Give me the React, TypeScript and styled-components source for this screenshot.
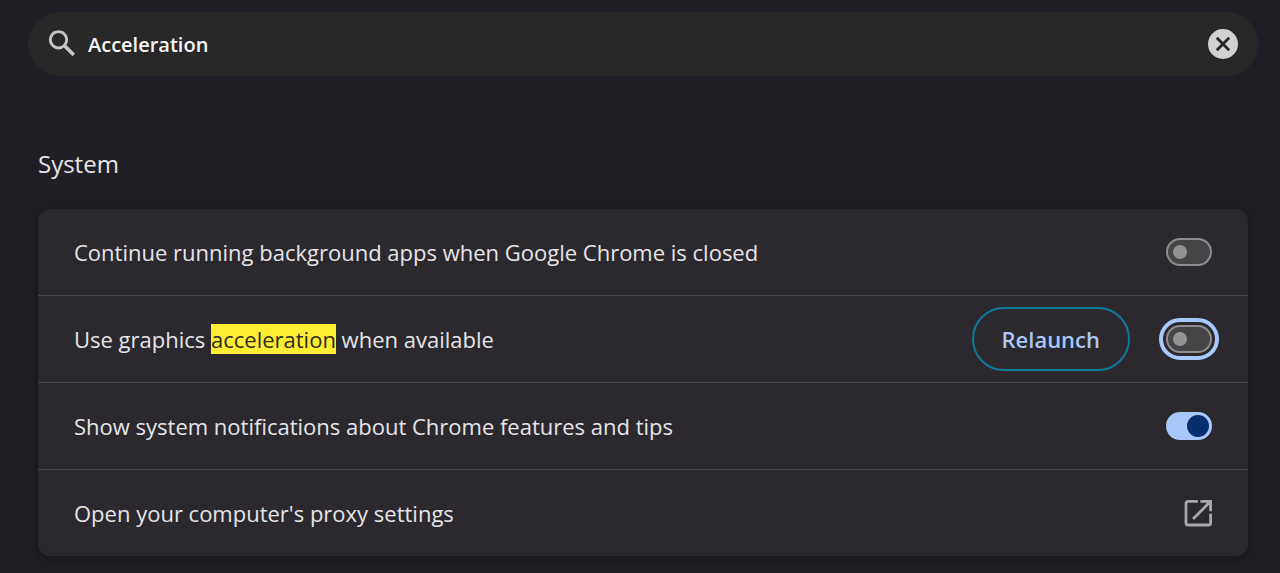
import React, { useState } from "react";
import styled, { createGlobalStyle, css } from "styled-components";

const GlobalStyle = createGlobalStyle`
  *, *::before, *::after { box-sizing: border-box; }
  body {
    margin: 0;
    background: #211f26;
    color: #e6e4e8;
    font-family: "Segoe UI", "Open Sans", "Noto Sans", sans-serif;
  }
`;

const Page = styled.main`
  padding: 12px 22px 17px 28px;
`;

const SearchBar = styled.form`
  display: flex;
  align-items: center;
  gap: 12px;
  height: 64px;
  padding: 0 20px;
  border-radius: 32px;
  background: #292829;
`;

const SearchIcon = styled.svg`
  flex: none;
  width: 28px;
  height: 28px;
  color: #c6c5c7;
`;

const SearchInput = styled.input`
  flex: 1;
  min-width: 0;
  padding: 2px 0 0;
  border: 0;
  outline: 0;
  background: transparent;
  color: #f6f5f7;
  font: 600 20px/28px "Segoe UI", "Open Sans", "Noto Sans", sans-serif;
`;

const ClearButton = styled.button`
  display: flex;
  flex: none;
  padding: 0;
  border: 0;
  border-radius: 50%;
  background: #d2d1d3;
  color: #252427;
  cursor: pointer;
`;

const Section = styled.section`
  padding: 72px 10px 0;
`;

const Heading = styled.h2`
  margin: 0 0 29px;
  font-size: 24px;
  font-weight: 400;
  line-height: 32px;
`;

const Card = styled.div`
  border-radius: 12px;
  background: #2b292e;
  box-shadow: 0 2px 6px 2px rgba(0, 0, 0, 0.2);
`;

const rowLayout = css`
  display: flex;
  align-items: center;
  gap: 36px;
  min-height: 86px;
  padding: 0 36px;
  font-size: 22px;
  line-height: 30px;
`;

const Row = styled.div`
  ${rowLayout}
  border-bottom: 1px solid #4a484d;
  box-sizing: content-box;
`;

const LinkRow = styled.a`
  ${rowLayout}
  color: inherit;
  text-decoration: none;
`;

const RowLabel = styled.label`
  flex: 1;
`;

const RowText = styled.span`
  flex: 1;
`;

const Highlight = styled.mark`
  background: #fdee33;
  color: #2f2b1c;
`;

const RelaunchButton = styled.button`
  height: 64px;
  padding: 0 28px;
  border: 2px solid #107a9b;
  border-radius: 32px;
  background: transparent;
  color: #a8c7fa;
  font: 600 22px/30px "Segoe UI", "Open Sans", "Noto Sans", sans-serif;
  cursor: pointer;
`;

const Switch = styled.input<{ $ringed?: boolean }>`
  appearance: none;
  display: flex;
  align-items: center;
  flex: none;
  width: 46px;
  height: 28px;
  margin: 0;
  padding: 0 5px;
  border: 2px solid #8d8c8e;
  border-radius: 14px;
  background: #454447;
  outline: ${(p) => (p.$ringed ? "4px solid #a8c7fa" : "none")};
  outline-offset: 3px;
  cursor: pointer;

  &::before {
    content: "";
    width: 14px;
    height: 14px;
    border-radius: 50%;
    background: #949395;
  }

  &:checked {
    justify-content: flex-end;
    padding: 0 1px;
    border-color: #a8c7fa;
    background: #a8c7fa;
  }

  &:checked::before {
    width: 22px;
    height: 22px;
    background: #062e6f;
  }
`;

const ExternalIcon = styled.svg`
  flex: none;
  width: 28px;
  height: 28px;
  color: #a9a8aa;
`;

export default function App() {
  const [query, setQuery] = useState("Acceleration");
  const [background, setBackground] = useState(false);
  const [graphics, setGraphics] = useState(false);
  const [tips, setTips] = useState(true);

  return (
    <>
      <GlobalStyle />
      <Page>
        <SearchBar role="search" onSubmit={(e) => e.preventDefault()}>
          <SearchIcon viewBox="0 0 28 28" fill="none" stroke="currentColor" aria-hidden="true">
            <circle cx="10.5" cy="9.8" r="8.2" strokeWidth="2.9" />
            <path d="M16.3 15.6 25.8 25.1" strokeWidth="3.6" />
          </SearchIcon>
          <SearchInput
            aria-label="Search settings"
            value={query}
            onChange={(e) => setQuery(e.target.value)}
          />
          <ClearButton type="button" aria-label="Clear search" onClick={() => setQuery("")}>
            <svg width="30" height="30" viewBox="0 0 30 30" fill="none" stroke="currentColor" strokeWidth="2.8" aria-hidden="true">
              <path d="M8.8 8.8 21.2 21.2M21.2 8.8 8.8 21.2" />
            </svg>
          </ClearButton>
        </SearchBar>

        <Section aria-labelledby="system">
          <Heading id="system">System</Heading>
          <Card>
            <Row>
              <RowLabel htmlFor="background">
                Continue running background apps when Google Chrome is closed
              </RowLabel>
              <Switch
                id="background"
                type="checkbox"
                role="switch"
                checked={background}
                onChange={(e) => setBackground(e.target.checked)}
              />
            </Row>
            <Row>
              <RowLabel htmlFor="graphics">
                Use graphics <Highlight>acceleration</Highlight> when available
              </RowLabel>
              <RelaunchButton type="button">Relaunch</RelaunchButton>
              <Switch
                id="graphics"
                type="checkbox"
                role="switch"
                $ringed
                checked={graphics}
                onChange={(e) => setGraphics(e.target.checked)}
              />
            </Row>
            <Row>
              <RowLabel htmlFor="tips">
                Show system notifications about Chrome features and tips
              </RowLabel>
              <Switch
                id="tips"
                type="checkbox"
                role="switch"
                checked={tips}
                onChange={(e) => setTips(e.target.checked)}
              />
            </Row>
            <LinkRow href="#proxy">
              <RowText>Open your computer's proxy settings</RowText>
              <ExternalIcon viewBox="0 0 28 28" fill="none" stroke="currentColor" strokeWidth="2.8" aria-hidden="true">
                <path d="M13.8 2.4H4a2 2 0 0 0-2 2V24a2 2 0 0 0 2 2h20.6a2 2 0 0 0 2-2V14.8" />
                <path d="M16.4 2.4h10.2V12.2M26.4 2.6 9 20" />
              </ExternalIcon>
            </LinkRow>
          </Card>
        </Section>
      </Page>
    </>
  );
}
